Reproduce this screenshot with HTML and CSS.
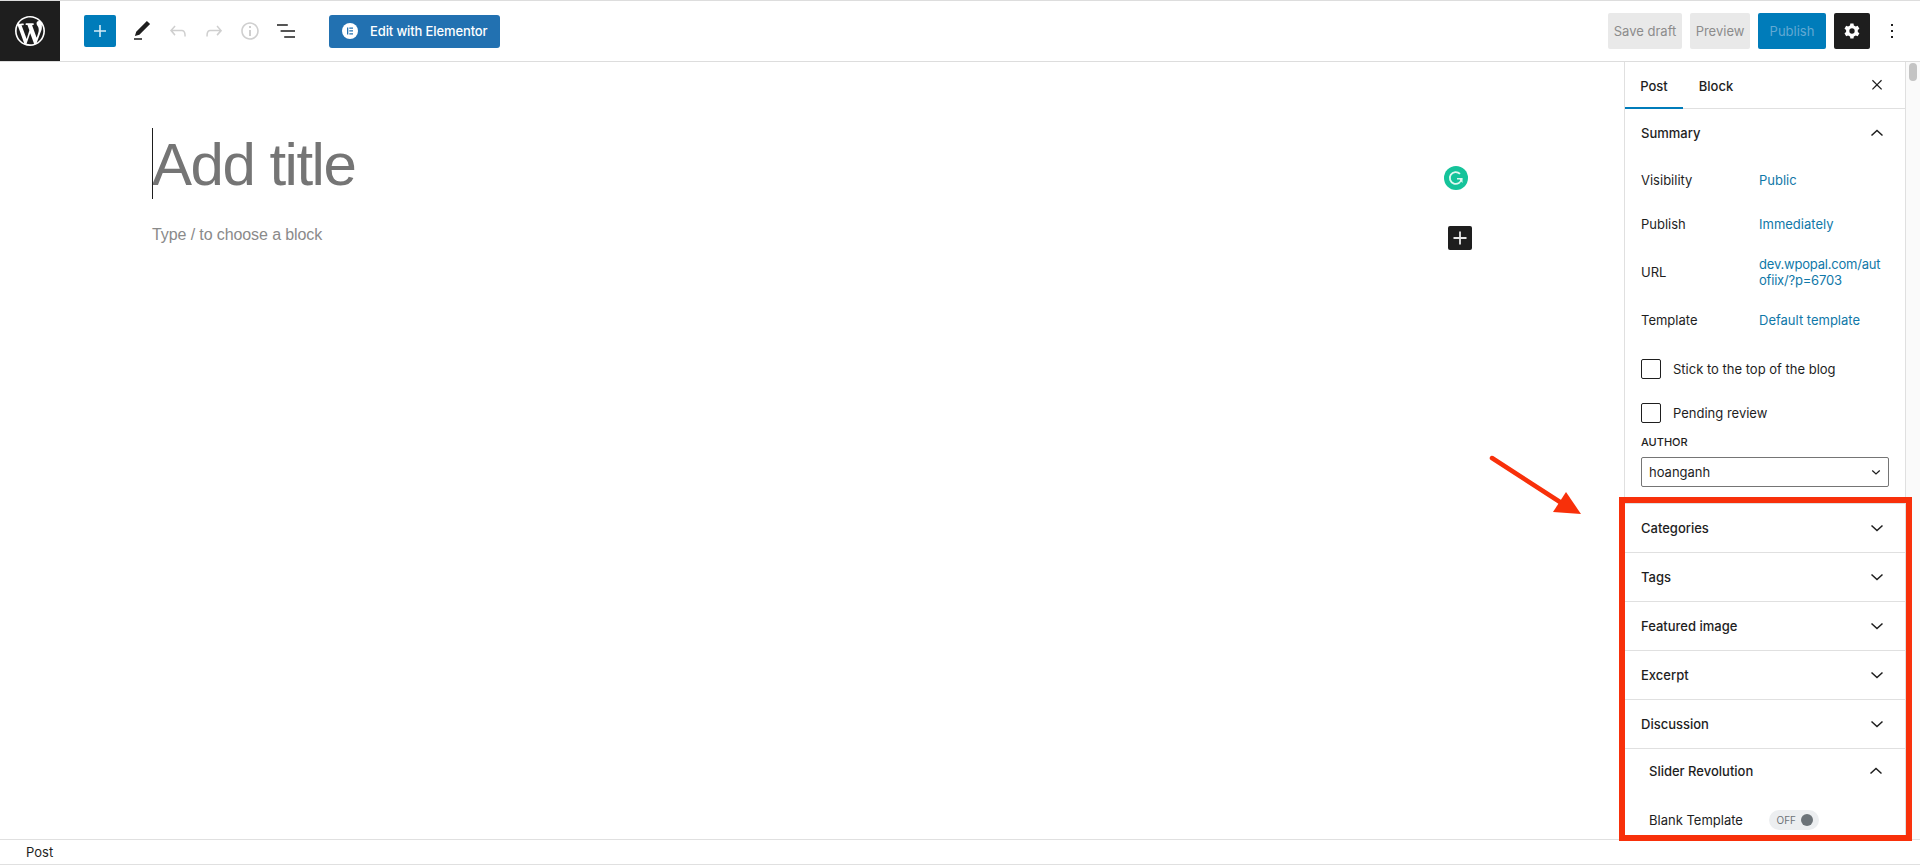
FILE: index.html
```html
<!DOCTYPE html>
<html lang="en">
<head>
<meta charset="utf-8">
<title>Add New Post</title>
<link rel="stylesheet" href="styles.css">
</head>
<body>
<div class="app">
  <header class="topbar">
    <div class="wp-logo">
      <svg viewBox="0 0 20 20" width="30" height="30"><path fill="#fff" d="M20 10c0-5.510-4.490-10-10-10C4.480 0 0 4.490 0 10c0 5.520 4.480 10 10 10 5.510 0 10-4.480 10-10zM7.780 15.370L4.370 6.220c.550-.020 1.170-.080 1.170-.080.500-.060.440-1.130-.060-1.110 0 0-1.450.110-2.370.110-.180 0-.370 0-.580-.010C4.120 2.690 6.890 1.050 10 1.050c2.320 0 4.430.870 6.020 2.340-.680-.110-1.650.390-1.650 1.580 0 .740.450 1.360.900 2.100.350.610.550 1.360.550 2.460 0 1.490-1.400 5-1.400 5l-3.030-8.370c.540-.020.820-.170.820-.170.500-.050.440-1.250-.060-1.220 0 0-1.440.120-2.380.120-.870 0-2.330-.120-2.330-.120-.500-.030-.560 1.200-.060 1.220l.920.080 1.260 3.410zM17.410 10c.240-.640.740-1.870.430-4.250.700 1.290 1.050 2.710 1.050 4.250 0 3.290-1.730 6.240-4.400 7.780.970-2.590 1.940-5.200 2.920-7.780zM6.100 18.090C3.120 16.650 1.110 13.530 1.110 10c0-1.300.230-2.480.720-3.590C3.250 10.300 4.670 14.200 6.100 18.090zm4.030-6.630l2.580 6.980c-.860.290-1.740.450-2.710.450-.790 0-1.570-.110-2.290-.330.810-2.380 1.620-4.740 2.420-7.100z"/></svg>
    </div>
    <div class="tools">
      <button class="tool-add" type="button"><svg viewBox="0 0 24 24" width="24" height="24"><path fill="#d4ecf7" d="M18 11.200h-5.200V6h-1.600v5.200H6v1.600h5.200V18h1.600v-5.200H18z"/></svg></button>
      <span class="tool tool-edit"><svg viewBox="0 0 24 24" width="24" height="24"><path fill="#1e1e1e" d="M20.100 5.100 16.900 2 6.200 12.700l-1.300 4.400 4.500-1.300L20.100 5.100zM4 20.800h8v-1.500H4v1.500z"/></svg></span>
      <span class="tool tool-undo"><svg viewBox="0 0 24 24" width="24" height="24"><path fill="#cfcfcf" d="M18.300 11.700c-.6-.6-1.400-.9-2.300-.9H6.700l2.900-3.300-1.100-1-4.500 5L8.500 16.700l1-1.100-2.700-3.300H16c.5 0 .9.200 1.300.5 1 1 1 3.400 1 4.500v.3h1.500v-.2c0-1.500 0-4.300-1.500-5.700z"/></svg></span>
      <span class="tool tool-redo"><svg viewBox="0 0 24 24" width="24" height="24"><path fill="#cfcfcf" d="M15.600 6.500l-1.100 1 2.900 3.300H8c-.9 0-1.700.3-2.300.9-1.400 1.500-1.400 4.200-1.400 5.700v.2h1.500v-.3c0-1.100 0-3.500 1-4.500.3-.3.700-.5 1.300-.5h9.200L14.500 15.600l1.100 1.100 4.500-5-4.500-5.200z"/></svg></span>
      <span class="tool tool-info"><svg viewBox="0 0 24 24" width="24" height="24"><path fill="#cfcfcf" d="M12 3.200c-4.800 0-8.800 3.900-8.800 8.800 0 4.800 3.900 8.800 8.800 8.800 4.800 0 8.800-3.900 8.800-8.800 0-4.800-4-8.800-8.800-8.800zm0 16c-4 0-7.200-3.300-7.200-7.200S8 4.800 12 4.800s7.200 3.300 7.200 7.200-3.200 7.200-7.200 7.200zM11 17h2v-6h-2v6zm0-8h2V7h-2v2z"/></svg></span>
      <span class="tool tool-list"><svg viewBox="0 0 24 24" width="24" height="24"><path fill="#1e1e1e" d="M13.800 5.200H3v1.500h10.800V5.200zm-3.600 12v1.500H21v-1.500H10.200zm-3.600-6v1.500h14.400v-1.500H6.600z"/></svg></span>
      <button class="elementor" type="button">
        <svg viewBox="0 0 16 16" width="16" height="16"><circle cx="8" cy="8" r="8" fill="#fff"/><path fill="#2271b1" d="M5 4.500h1.300v7H5zM7.300 4.500H11v1.300H7.300zM7.300 7.300H11v1.300H7.300zM7.300 10.200H11v1.300H7.300z"/></svg>
        <span>Edit with Elementor</span>
      </button>
    </div>
    <div class="actions">
      <button class="btn-muted btn-save" type="button">Save draft</button>
      <button class="btn-muted btn-preview" type="button">Preview</button>
      <button class="btn-publish" type="button">Publish</button>
      <button class="btn-settings" type="button"><svg viewBox="0 0 24 24" width="20" height="20"><path fill="#fff" fill-rule="evenodd" d="M18.900 13.300c.1-.4.100-.9.100-1.300s0-.9-.1-1.300l2-1.500-2.100-3.500-2.300.9c-.7-.5-1.400-1-2.300-1.300L13.800 3h-3.800l-.4 2.300c-.8.300-1.600.8-2.300 1.300l-2.300-.9-2 3.500 2 1.500c-.1.400-.1.900-.1 1.300s0 .9.100 1.300l-2 1.500 2 3.500 2.300-.9c.7.500 1.500 1 2.300 1.300l.4 2.300h3.800l.4-2.300c.9-.3 1.600-.8 2.300-1.300l2.300.9 2.100-3.500zM12 15.200a3.200 3.200 0 1 1 0-6.400 3.200 3.200 0 0 1 0 6.400z"/></svg></button>
      <span class="more"><svg viewBox="0 0 24 24" width="24" height="24"><path fill="#1e1e1e" d="M13 19h-2v-2h2v2zm0-6h-2v-2h2v2zm0-6h-2V5h2v2z"/></svg></span>
    </div>
  </header>

  <div class="workspace">
    <main class="editor">
      <div class="canvas">
        <div class="title-row">
          <span class="caret"></span>
          <h1 class="title">Add title</h1>
          <span class="grammarly"><svg viewBox="0 0 24 24" width="24" height="24"><circle cx="12" cy="12" r="12" fill="#15c39a"/><path fill="none" stroke="#dff7f0" stroke-width="1.800" d="M17.600 12.500a5.900 5.900 0 1 1-1.600-4.600"/><path fill="#dff7f0" d="M13 12h5.500v5l-1.800-1.900-1-1.600H13z"/></svg></span>
        </div>
        <div class="block-row">
          <p class="placeholder">Type / to choose a block</p>
          <span class="block-add"><svg viewBox="0 0 24 24" width="24" height="24"><path fill="#e8e8e8" d="M18.500 11.100h-5.600V5.500h-1.800v5.600H5.500v1.800h5.600v5.600h1.800v-5.600h5.600z"/></svg></span>
        </div>
      </div>
    </main>

    <aside class="sidebar">
      <div class="tabs">
        <span class="tab tab-active">Post</span>
        <span class="tab tab-block">Block</span>
        <span class="close"><svg viewBox="0 0 24 24" width="20" height="20"><path fill="#1e1e1e" d="M13 11.800l5-5-1.100-1L12 10.700 7 5.800l-1 1 4.900 5-4.900 4.900 1 1.100 5-5 5 5 1.100-1.100z"/></svg></span>
      </div>
      <section class="panel panel-summary">
        <div class="panel-head">
          <span>Summary</span>
          <svg class="chev" viewBox="0 0 24 24" width="24" height="24"><path d="M6.500 14.500 12 9.500l5.500 5"/></svg>
        </div>
        <div class="row row-vis"><span class="row-label">Visibility</span><span class="row-value">Public</span></div>
        <div class="row row-pub"><span class="row-label">Publish</span><span class="row-value">Immediately</span></div>
        <div class="row row-url"><span class="row-label">URL</span><span class="row-value url-value">dev.wpopal.com/aut<br>ofiix/?p=6703</span></div>
        <div class="row row-tpl"><span class="row-label">Template</span><span class="row-value">Default template</span></div>
        <label class="check check-stick"><span class="box"></span><span>Stick to the top of the blog</span></label>
        <label class="check check-pending"><span class="box"></span><span>Pending review</span></label>
        <div class="author-label">AUTHOR</div>
        <div class="select"><span>hoanganh</span><svg class="chev-small" viewBox="0 0 24 24" width="18" height="18"><path d="M7 10l5 4.500 5-4.500"/></svg></div>
      </section>
      <section class="panel panel-closed"><div class="panel-head"><span>Categories</span><svg class="chev" viewBox="0 0 24 24" width="24" height="24"><path d="M6.500 9.500l5.500 5 5.500-5"/></svg></div></section>
      <section class="panel panel-closed"><div class="panel-head"><span>Tags</span><svg class="chev" viewBox="0 0 24 24" width="24" height="24"><path d="M6.500 9.500l5.500 5 5.500-5"/></svg></div></section>
      <section class="panel panel-closed"><div class="panel-head"><span>Featured image</span><svg class="chev" viewBox="0 0 24 24" width="24" height="24"><path d="M6.500 9.500l5.500 5 5.500-5"/></svg></div></section>
      <section class="panel panel-closed"><div class="panel-head"><span>Excerpt</span><svg class="chev" viewBox="0 0 24 24" width="24" height="24"><path d="M6.500 9.500l5.500 5 5.500-5"/></svg></div></section>
      <section class="panel panel-closed"><div class="panel-head"><span>Discussion</span><svg class="chev" viewBox="0 0 24 24" width="24" height="24"><path d="M6.500 9.500l5.500 5 5.500-5"/></svg></div></section>
      <section class="panel panel-slider">
        <div class="slider-head"><span>Slider Revolution</span><svg class="chev" viewBox="0 0 24 24" width="24" height="24"><path d="M6.500 14.500 12 9.500l5.500 5"/></svg></div>
        <div class="slider-row"><span>Blank Template</span><span class="toggle"><span>OFF</span><i class="knob"></i></span></div>
      </section>
    </aside>
    <div class="scrollbar"><span class="thumb"></span></div>
  </div>

  <footer class="footer"><span>Post</span></footer>

  <div class="mark-box"></div>
  <svg class="mark-arrow" viewBox="0 0 100 70" width="100" height="70"><path fill="none" stroke="#f8300a" stroke-width="4.500" stroke-linecap="round" d="M3 3 71 47"/><path fill="#f8300a" d="M92 59 64 57 77 37z"/></svg>
</div>
</body>
</html>
```

FILE: styles.css
```css
* { box-sizing: border-box; }
html, body { margin: 0; height: 100%; }
body { font-family: Inter, "Noto Sans", sans-serif; font-size: 13px; color: #1e1e1e; background: #fff; overflow: hidden; }
button { font: inherit; border: 0; padding: 0; }
svg { display: block; }

.app { position: relative; width: 1920px; height: 865px; display: flex; flex-direction: column; }

.topbar { height: 62px; flex: none; display: flex; align-items: center; border-top: 1px solid #ddd; border-bottom: 1px solid #ddd; }
.wp-logo { width: 60px; height: 60px; background: #1e1e1e; display: flex; align-items: center; justify-content: center; flex: none; }
.tools { display: flex; align-items: center; margin-left: 24px; }
.tool-add { width: 32px; height: 32px; background: #007cba; border-radius: 2px; display: flex; align-items: center; justify-content: center; }
.tool { width: 24px; height: 24px; flex: none; }
.tool-edit { margin-left: 14px; }
.tool-undo { margin-left: 12px; }
.tool-redo { margin-left: 12px; }
.tool-info { margin-left: 12px; }
.tool-list { margin-left: 12px; }
.elementor { margin-left: 31px; width: 171px; height: 33px; background: #2271b1; border-radius: 3px; color: #fff; font-weight: 500; display: flex; align-items: center; padding-left: 13px; gap: 12px; font-size: 13px; letter-spacing: -0.12px; }

.actions { margin-left: auto; display: flex; align-items: center; }
.btn-muted { height: 36px; background: #e9e9e9; color: #8c8c8c; border-radius: 2px; }
.btn-save { width: 74px; }
.btn-preview { width: 60px; margin-left: 8px; }
.btn-publish { width: 68px; height: 36px; margin-left: 8px; background: #007cba; color: #62a9d3; border-radius: 2px; }
.btn-settings { width: 36px; height: 36px; margin-left: 8px; background: #1e1e1e; border-radius: 2px; display: flex; align-items: center; justify-content: center; }
.more { width: 24px; height: 24px; margin-left: 10px; margin-right: 16px; }

.workspace { flex: 1; min-height: 0; display: flex; }
.editor { flex: 1; min-width: 0; }
.canvas { width: 1472px; margin-left: 152px; }
.title-row { position: relative; height: 70px; margin-top: 66px; display: flex; align-items: flex-start; }
.caret { position: absolute; left: 0; top: 0; width: 1px; height: 71px; background: #1e1e1e; }
.title { margin: 2px 0 0; font-family: "Liberation Sans", Arial, sans-serif; font-weight: 400; font-size: 60px; line-height: 70px; letter-spacing: -1.5px; color: #757575; white-space: nowrap; }
.grammarly { position: absolute; left: 1292px; top: 38px; }
.block-row { position: relative; margin-top: 25px; height: 24px; }
.placeholder { margin: 0; font-family: "Liberation Sans", Arial, sans-serif; font-size: 16px; line-height: 24px; letter-spacing: -0.1px; color: #8a8a8a; }
.block-add { position: absolute; left: 1296px; top: 3px; width: 24px; height: 24px; background: #1e1e1e; border-radius: 2px; }

.sidebar { width: 282px; flex: none; border-left: 1px solid #e0e0e0; border-right: 1px solid #e0e0e0; overflow: hidden; }
.scrollbar { width: 14px; flex: none; background: #fafafa; position: relative; }
.thumb { position: absolute; left: 3px; top: 1px; width: 8px; height: 18px; background: #c4c4c4; border-radius: 4px; }

.tabs { height: 47px; display: flex; align-items: stretch; border-bottom: 1px solid #e0e0e0; }
.tab { width: 58px; margin-bottom: -1px; display: flex; align-items: center; justify-content: center; font-weight: 500; }
.tab-active { box-shadow: inset 0 -2px 0 #007cba; }
.tab-block { width: 66px; }
.close { margin-left: auto; margin-right: 18px; align-self: center; }

.panel { border-bottom: 1px solid #e0e0e0; }
.panel-head { height: 48px; padding: 0 16px; display: flex; align-items: center; justify-content: space-between; font-weight: 500; }
.panel-closed { height: 49px; }
.chev { fill: none; stroke: #1e1e1e; stroke-width: 1.5; }
.panel-summary { height: 395px; }
.row { display: flex; align-items: center; padding: 0 16px; }
.row-label { width: 118px; flex: none; }
.row-value { color: #1078a8; line-height: 16px; }
.url-value { letter-spacing: -0.2px; }
.row-vis { height: 44px; margin-top: 1px; }
.row-pub { height: 44px; }
.row-url { height: 52px; }
.row-tpl { height: 44px; }
.check { display: flex; align-items: center; gap: 12px; padding: 0 16px; height: 44px; }
.check-stick { margin-top: 5px; }
.box { width: 20px; height: 20px; border: 1px solid #1e1e1e; border-radius: 2px; flex: none; }
.author-label { padding: 0 16px; font-size: 11px; line-height: 14px; font-weight: 500; }
.select { margin: 8px 16px 0; height: 30px; border: 1px solid #757575; border-radius: 2px; display: flex; align-items: center; justify-content: space-between; padding: 0 3px 0 7px; }
.chev-small { fill: none; stroke: #1e1e1e; stroke-width: 1.7; }

.slider-head { height: 44px; padding: 0 17px 0 24px; display: flex; align-items: center; justify-content: space-between; font-weight: 500; }
.slider-row { display: flex; align-items: center; padding: 0 24px; margin-top: 7px; height: 40px; }
.slider-row > span:first-child { width: 120px; flex: none; }
.toggle { width: 50px; height: 20px; border-radius: 10px; background: #eceef0; display: flex; align-items: center; justify-content: flex-end; gap: 5px; padding-right: 6px; font-size: 10px; color: #6c7378; }
.knob { width: 12px; height: 12px; border-radius: 50%; background: #6c7378; }
.panel-slider { border-bottom: 0; }

.footer { height: 26px; flex: none; border-top: 1px solid #e0e0e0; border-bottom: 1px solid #e0e0e0; display: flex; align-items: center; padding-left: 26px; background: #fff; position: relative; }

.mark-box { position: absolute; left: 1619px; top: 497px; width: 293px; height: 344px; border: 6px solid #f8300a; }
.mark-arrow { position: absolute; left: 1489px; top: 455px; }
```
